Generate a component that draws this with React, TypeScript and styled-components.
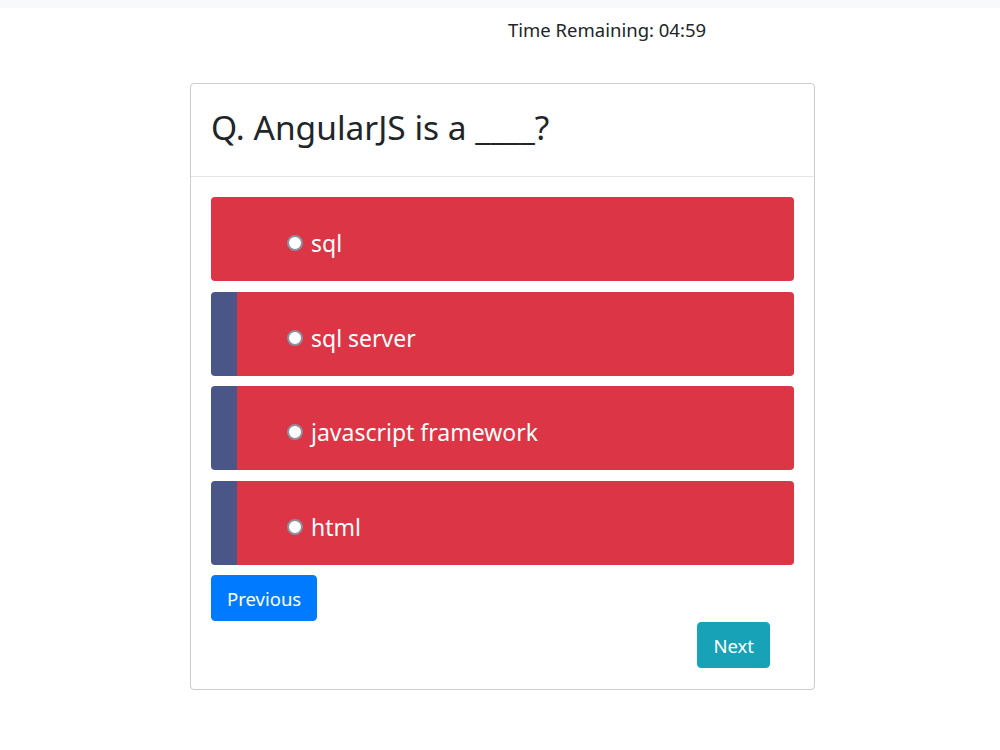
import styled, { createGlobalStyle } from "styled-components";

const GlobalStyle = createGlobalStyle`
  body {
    margin: 0;
    font-family: "Noto Sans", "Open Sans", sans-serif;
    color: #212529;
    background: #fff;
  }
`;

const TopBar = styled.div`
  height: 8px;
  background: #f8f9fa;
`;

const Timer = styled.div`
  padding-left: 508px;
  padding-top: 10px;
  height: 30px;
  line-height: 24px;
  font-size: 18.5px;
`;

const Card = styled.div`
  width: 623px;
  margin: 35px 0 0 190px;
  border: 1px solid rgba(0, 0, 0, 0.2);
  border-radius: 4px;
`;

const CardHeader = styled.div`
  height: 92px;
  padding: 0 20px;
  display: flex;
  align-items: center;
  border-bottom: 1px solid rgba(0, 0, 0, 0.1);
`;

const Question = styled.h2`
  margin: 0 0 7px;
  font-size: 33.5px;
  font-weight: 400;
`;

const CardBody = styled.div`
  padding: 20px 20px 21px;
  display: flex;
  flex-direction: column;
`;

const Options = styled.div`
  display: flex;
  flex-direction: column;
  gap: 10.3px;
  margin-bottom: 10px;
`;

const Option = styled.label<{ $marked: boolean }>`
  height: 84.3px;
  box-sizing: border-box;
  display: flex;
  align-items: center;
  gap: 8px;
  padding: 8px 0 0 ${(p) => (p.$marked ? 50 : 76)}px;
  background: #dc3545;
  border-left: ${(p) => (p.$marked ? "26px solid #4a5588" : "0")};
  border-radius: 4px;
  color: #fff;
  font-size: 23px;
  cursor: pointer;
`;

const Radio = styled.span`
  width: 16px;
  height: 16px;
  box-sizing: border-box;
  border-radius: 50%;
  background: #fff;
  border: 2px solid #8f8f9d;
  flex-shrink: 0;
`;

const Button = styled.button<{ $tone: string }>`
  padding: 0 15px;
  height: 46px;
  font-family: inherit;
  font-size: 18.5px;
  color: #fff;
  background: ${(p) => p.$tone};
  border: 1px solid ${(p) => p.$tone};
  border-radius: 4px;
  cursor: pointer;
`;

const Footer = styled.div`
  display: flex;
  flex-direction: column;
  align-items: flex-start;
`;

const NextRow = styled.div`
  align-self: flex-end;
  margin: 1px 24px 0 0;
`;

const options = [
  { text: "sql", marked: false },
  { text: "sql server", marked: true },
  { text: "javascript framework", marked: true },
  { text: "html", marked: true },
];

export default function App() {
  return (
    <>
      <GlobalStyle />
      <TopBar />
      <Timer>Time Remaining: 04:59</Timer>
      <Card>
        <CardHeader>
          <Question>Q. AngularJS is a ____?</Question>
        </CardHeader>
        <CardBody>
          <Options>
            {options.map((o) => (
              <Option key={o.text} $marked={o.marked}>
                <Radio />
                {o.text}
              </Option>
            ))}
          </Options>
          <Footer>
            <Button $tone="#007bff">Previous</Button>
            <NextRow>
              <Button $tone="#17a2b8">Next</Button>
            </NextRow>
          </Footer>
        </CardBody>
      </Card>
    </>
  );
}
